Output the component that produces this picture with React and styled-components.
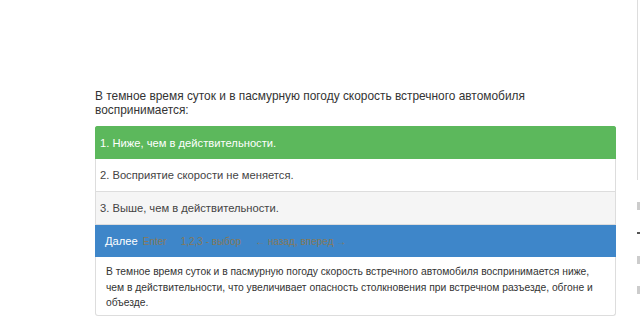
import styled, { createGlobalStyle } from 'styled-components';

const GlobalStyle = createGlobalStyle`
  body {
    margin: 0;
    background: #fff;
    font-family: "Liberation Sans", Arial, sans-serif;
    color: #333;
  }
`;

const answers = [
  { text: '1. Ниже, чем в действительности.', state: 'right' },
  { text: '2. Восприятие скорости не меняется.', state: 'plain' },
  { text: '3. Выше, чем в действительности.', state: 'muted' },
];

export default function App() {
  return (
    <>
      <GlobalStyle />
      <Page>
        <Main>
          <Question>
            В темное время суток и в пасмурную погоду скорость встречного автомобиля
            воспринимается:
          </Question>
          <List>
            {answers.map((a) => (
              <Answer key={a.text} state={a.state}>
                {a.text}
              </Answer>
            ))}
            <NextBar>
              <NextLabel>Далее</NextLabel>
              <Hint>Enter</Hint>
              <Hint>1,2,3 - выбор</Hint>
              <Hint>← назад, вперед →</Hint>
            </NextBar>
          </List>
          <Explain>
            В темное время суток и в пасмурную погоду скорость встречного автомобиля воспринимается ниже,
            чем в действительности, что увеличивает опасность столкновения при встречном разъезде, обгоне и
            объезде.
          </Explain>
        </Main>
        <Aside>
          <SideFrame />
          <SideMark />
          <SideMark dark />
          <SideMark />
          <SideMark />
        </Aside>
      </Page>
    </>
  );
}

const Page = styled.div`
  display: flex;
  padding-left: 95px;
  gap: 21px;
  height: 331px;
  overflow: hidden;
`;

const Main = styled.div`
  width: 522px;
  padding-top: 90px;
  display: flex;
  flex-direction: column;
`;

const Question = styled.p`
  margin: 0 0 9px;
  font-size: 11.9px;
  line-height: 13.5px;
  color: #333;
`;

const List = styled.div`
  display: flex;
  flex-direction: column;
  border-radius: 3px 3px 0 0;
  overflow: hidden;
`;

const rowBg = { right: '#5cb85c', plain: '#fff', muted: '#f5f5f5' };

const Answer = styled.div`
  height: 33px;
  box-sizing: border-box;
  display: flex;
  align-items: center;
  padding: 0 4px;
  font-size: 11.2px;
  background: ${({ state }) => rowBg[state]};
  color: ${({ state }) => (state === 'right' ? '#fff' : '#444')};
  border: 1px solid ${({ state }) => (state === 'right' ? '#5cb85c' : '#ddd')};
  border-top: ${({ state }) => (state === 'right' ? '1px solid #5cb85c' : 'none')};
`;

const NextBar = styled.div`
  height: 32px;
  display: flex;
  align-items: center;
  gap: 14px;
  padding: 0 10px;
  background: #3e86c9;
`;

const NextLabel = styled.span`
  color: #fff;
  font-size: 11.2px;
  margin-right: -9px;
`;

const Hint = styled.span`
  color: #85795a;
  font-size: 10px;
`;

const Explain = styled.div`
  box-sizing: border-box;
  border: 1px solid #ddd;
  border-top: none;
  border-radius: 0 0 3px 3px;
  padding: 7px 10px 4px;
  font-size: 10.3px;
  line-height: 15.5px;
  color: #333;
`;

const Aside = styled.div`
  flex: 1;
  display: flex;
  flex-direction: column;
  gap: 22px;
`;

const SideFrame = styled.div`
  height: 180px;
  border-left: 1px solid #ddd;
`;

const SideMark = styled.div`
  width: 3px;
  height: ${({ dark }) => (dark ? '2px' : '8px')};
  background: ${({ dark }) => (dark ? '#555' : '#ccc')};
`;
